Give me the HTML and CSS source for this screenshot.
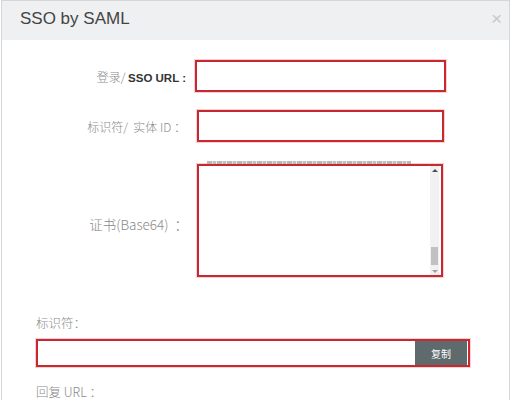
FILE: index.html
```html
<!DOCTYPE html>
<html lang="zh">
<head>
<meta charset="utf-8">
<link rel="stylesheet" href="styles.css">
</head>
<body>
<div class="dialog">
  <div class="header">
    <span class="title">SSO by SAML</span>
    <span class="close">×</span>
  </div>
  <div class="body">
    <div class="row row1">
      <div class="label"><span class="cn">登录/ </span><b class="en">SSO URL :</b></div>
      <div class="box box1"></div>
    </div>
    <div class="row row2">
      <div class="label"><span class="cn">标识符/ &nbsp;实体 ID ：</span></div>
      <div class="box box2"></div>
    </div>
    <div class="row row3">
      <div class="label"><span class="cn big">证书(Base64) &nbsp;：</span></div>
      <div class="areawrap">
        <div class="peek"></div>
        <div class="box area">
          <div class="areatext"></div>
          <div class="sbar">
            <div class="arrow up"></div>
            <div class="track"><div class="thumb"></div></div>
            <div class="arrow down"></div>
          </div>
        </div>
      </div>
    </div>
    <div class="section">
      <div class="slabel">标识符：</div>
      <div class="box copybox">
        <div class="copyinput"></div>
        <div class="copybtn">复制</div>
      </div>
      <div class="slabel reply">回复 URL ：</div>
    </div>
  </div>
</div>
</body>
</html>
```
FILE: styles.css
```css
html, body {
  margin: 0;
  padding: 0;
  background: #fff;
}
body {
  font-family: "Liberation Sans", "Noto Sans CJK SC", sans-serif;
  width: 512px;
  height: 400px;
  overflow: hidden;
}
.dialog {
  margin-left: 1px;
  width: 509px;
  height: 400px;
  border-left: 1px solid #d4d6d8;
  border-right: 1px solid #d4d6d8;
  box-sizing: border-box;
}
.header {
  height: 40px;
  background: #eef0f1;
  display: flex;
  align-items: center;
  justify-content: space-between;
  padding: 0 7px 0 18px;
  border-top: 1px solid #d4d6d8;
  box-sizing: border-box;
}
.title {
  font-size: 17px;
  color: #444;
  padding-bottom: 4px;
}
.close {
  font-size: 19px;
  color: #c6c9cb;
  padding-bottom: 4px;
}
.body {
  padding-top: 20px;
}
.row {
  display: flex;
  align-items: center;
}
.label {
  width: 183px;
  text-align: right;
  font-size: 12px;
  white-space: nowrap;
}
.cn {
  font-family: "Noto Sans CJK SC", sans-serif;
  font-weight: 300;
  color: #8a8a8a;
  font-size: 12px;
}
.cn.big {
  font-size: 13.5px;
}
.en {
  color: #333;
  font-weight: bold;
  font-size: 11.5px;
}
.box {
  border: 2px solid #c62930;
  box-shadow: 0 0 0 1px rgba(230, 120, 130, 0.35);
  box-sizing: border-box;
  background: #fff;
}
.row1 .label { width: 184px; }
.box1 {
  margin-left: 9px;
  width: 251px;
  height: 32px;
}
.row1 { margin-bottom: 18px; }
.row2 .label { width: 184px; }
.box2 {
  margin-left: 11px;
  width: 247px;
  height: 32px;
}
.row3 { align-items: flex-start; }
.row3 .label {
  width: 186px;
  margin-top: 72px;
  line-height: 20px;
}
.areawrap {
  margin-left: 9px;
  display: flex;
  flex-direction: column;
}
.peek {
  height: 3px;
  margin-left: 10px;
  width: 204px;
  margin-top: 19px;
  background: repeating-linear-gradient(90deg, #a8a8a8 0 5px, #d8d8d8 5px 6px, #b0b0b0 6px 9px, #e4e4e4 9px 10px);
  opacity: 0.8;
}
.area {
  width: 246px;
  height: 113px;
  display: flex;
  padding: 0 2px 0 0;
}
.areatext { flex: 1; }
.sbar {
  width: 9px;
  background: #f1f1f1;
  display: flex;
  flex-direction: column;
}
.arrow {
  height: 8px;
  display: flex;
  align-items: center;
  justify-content: center;
}
.arrow.up::after {
  content: "";
  border-left: 3px solid transparent;
  border-right: 3px solid transparent;
  border-bottom: 3px solid #505050;
}
.arrow.down::after {
  content: "";
  border-left: 3px solid transparent;
  border-right: 3px solid transparent;
  border-top: 3px solid #a0a0a0;
}
.track {
  flex: 1;
  display: flex;
  flex-direction: column;
  justify-content: flex-end;
  padding-bottom: 2px;
}
.thumb {
  height: 18px;
  background: #c1c1c1;
  margin: 0 1px;
}
.section {
  padding: 37px 0 0 34px;
}
.slabel {
  font-family: "Noto Sans CJK SC", sans-serif;
  font-weight: 300;
  color: #8a8a8a;
  font-size: 12.5px;
  line-height: 18px;
}
.copybox {
  margin-top: 7px;
  width: 434px;
  height: 28px;
  display: flex;
  padding: 0 1px 0 0;
}
.copyinput { flex: 1; }
.copybtn {
  width: 52px;
  background: #5e6a6c;
  color: #fff;
  font-family: "Noto Sans CJK SC", sans-serif;
  font-size: 10px;
  display: flex;
  align-items: center;
  justify-content: center;
}
.reply {
  margin-top: 17px;
  line-height: 16px;
}
```
